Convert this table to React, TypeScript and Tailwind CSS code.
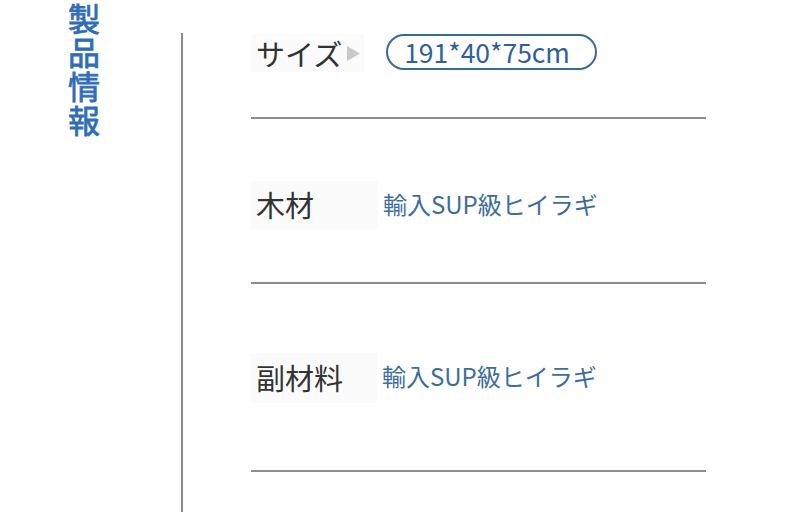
import React from "react";

const jp = { fontFamily: '"Noto Sans CJK JP", "Noto Sans", sans-serif' };

export default function App() {
  return (
    <div className="w-[790px] h-[512px] bg-white overflow-hidden flex" style={jp}>
      {/* left title column */}
      <div className="w-[181px] shrink-0 flex">
        <div className="ml-[68px] flex flex-col text-[32px] leading-[34px] text-[#2f6db4] font-normal [-webkit-text-stroke:0.8px_#2f6db4]">
          <span>製</span>
          <span>品</span>
          <span>情</span>
          <span>報</span>
        </div>
      </div>
      {/* vertical rule */}
      <div className="mt-[33px] w-[2px] bg-[#8c8c8c] h-[479px] shrink-0" />
      {/* right rows */}
      <div className="ml-[68px] w-[455px] flex flex-col">
        <div className="h-[119px] border-b-2 border-[#8c8c8c] pt-[34px] flex items-start">
          <div className="flex items-center h-[38px] bg-[#fbfbfb] pl-[5px] pr-[3px]">
            <span className="text-[29px] leading-none text-[#333333]">サイズ</span>
            <svg width="14" height="15" viewBox="0 0 14 15" className="ml-[5px]">
              <polygon points="0,0 13,7.5 0,15" fill="#c8c8c8" />
            </svg>
          </div>
          <div className="ml-[22px] h-[36px] w-[211px] rounded-full border-2 border-[#3a6a9c] flex items-center pl-[16px] text-[26.5px] text-[#2f6199] leading-none">
            191*40*75cm
          </div>
        </div>
        <div className="h-[165px] border-b-2 border-[#8c8c8c] pt-[62px] flex items-start">
          <div className="w-[127px] h-[48px] bg-[#fbfbfb] flex items-center pl-[5px]">
            <span className="text-[29px] text-[#333333]">木材</span>
          </div>
          <div className="ml-[5px] h-[46px] flex items-center text-[24px] text-[#3d6d9a]">
            輸入SUP級ヒイラギ
          </div>
        </div>
        <div className="h-[188px] border-b-2 border-[#8c8c8c] pt-[69px] flex items-start">
          <div className="w-[126px] h-[50px] bg-[#fbfbfb] flex items-center pl-[5px]">
            <span className="text-[29px] text-[#333333]">副材料</span>
          </div>
          <div className="ml-[5px] h-[46px] flex items-center text-[24px] text-[#3d6d9a]">
            輸入SUP級ヒイラギ
          </div>
        </div>
      </div>
    </div>
  );
}
